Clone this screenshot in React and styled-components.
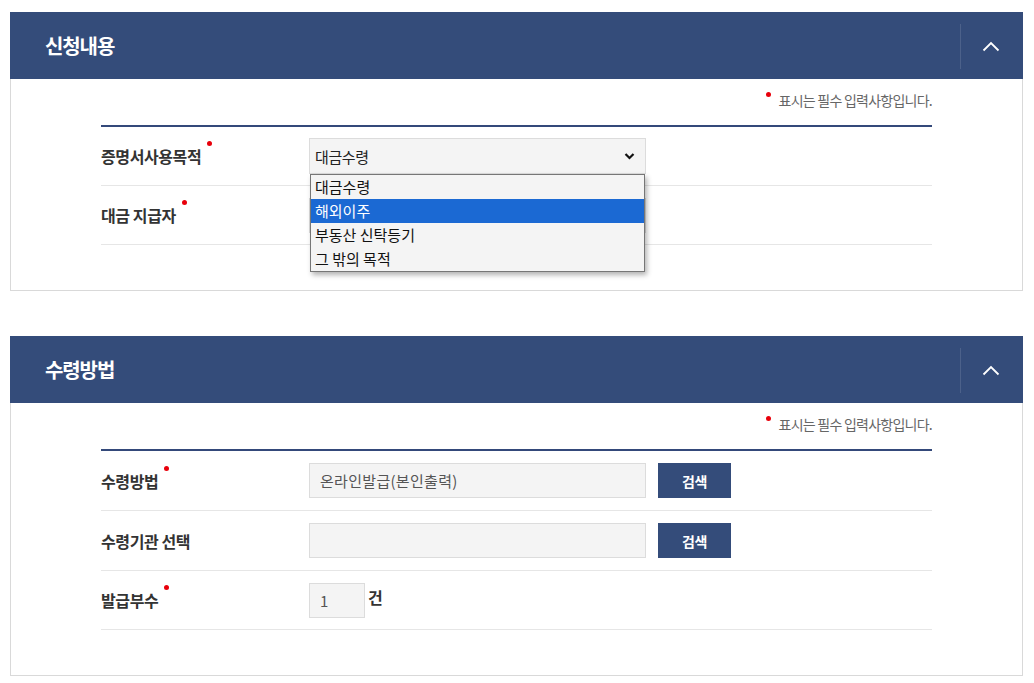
import React from "react";
import styled, { createGlobalStyle } from "styled-components";

const GlobalStyle = createGlobalStyle`
  * { box-sizing: border-box; }
  body {
    margin: 0;
    background: #fff;
    font-family: "Noto Sans CJK KR", "Noto Sans", sans-serif;
    color: #333;
  }
`;

const Page = styled.div`
  padding: 12px 11px 0 10px;
  display: flex;
  flex-direction: column;
  gap: 45px;
`;

const Panel = styled.section`
  width: 1013px;
`;

const Header = styled.div`
  height: 67px;
  background: #344c7a;
  display: flex;
  align-items: center;
  justify-content: space-between;
  padding-left: 35px;
  h2 {
    margin: 0;
    color: #fff;
    font-size: 20px;
    font-weight: 700;
    letter-spacing: -1.1px;
  }
`;

const Toggle = styled.button`
  width: 63px;
  height: 45px;
  margin-top: 2px;
  border: 0;
  border-left: 1px solid rgba(255, 255, 255, 0.12);
  background: transparent;
  display: flex;
  align-items: center;
  justify-content: center;
  padding: 0 2px 0 0;
  cursor: pointer;
`;

const Body = styled.div`
  border: 1px solid #d9d9d9;
  border-top: 0;
  padding: 0 90px 45px;
`;

const Note = styled.p`
  margin: 0;
  height: 46px;
  padding-top: 12px;
  line-height: 19px;
  text-align: right;
  font-size: 14px;
  color: #666;
  letter-spacing: -0.75px;
  span {
    position: relative;
    display: inline-block;
    width: 5px;
    height: 5px;
    margin-right: 8px;
    top: -9px;
    border-radius: 50%;
    background: #e8000b;
  }
`;

const Table = styled.div`
  border-top: 2px solid #34497a;
`;

const Row = styled.div`
  height: ${p => p.$h || 59}px;
  border-bottom: 1px solid #e6e6e6;
  display: flex;
  align-items: center;
`;

const Label = styled.div`
  width: 208px;
  flex-shrink: 0;
  font-size: 16px;
  font-weight: 700;
  color: #333;
  letter-spacing: -0.4px;
  span {
    position: relative;
    display: inline-block;
  }
  span::after {
    content: ${p => (p.$required ? '""' : "none")};
    position: absolute;
    right: -11px;
    top: -3px;
    width: 5px;
    height: 5px;
    border-radius: 50%;
    background: #e8000b;
  }
`;

const Field = styled.div`
  display: flex;
  align-items: center;
  gap: 12px;
  position: relative;
`;

const Input = styled.div`
  width: ${p => p.$w || 337}px;
  height: 35px;
  background: #f4f4f4;
  border: 1px solid #dcdcdc;
  padding-left: 10px;
  display: flex;
  align-items: center;
  font-size: 15px;
  color: #555;
  letter-spacing: 0.3px;
`;

const SelectBox = styled.div`
  width: 337px;
  height: 36px;
  background: #f4f4f4;
  border: 1px solid #dcdcdc;
  padding: 0 10px 0 5px;
  display: flex;
  align-items: center;
  justify-content: space-between;
  font-size: 15px;
  color: #222;
  letter-spacing: -0.4px;
`;

const Options = styled.ul`
  position: absolute;
  top: 36px;
  left: 1px;
  width: 335px;
  margin: 0;
  padding: 0;
  list-style: none;
  background: #f4f4f4;
  border: 1px solid #767676;
  box-shadow: 2px 3px 5px rgba(0, 0, 0, 0.3);
  z-index: 10;
`;

const Option = styled.li`
  height: 24px;
  line-height: 24px;
  padding-left: 4px;
  font-size: 15px;
  color: ${p => (p.$active ? "#fff" : "#111")};
  background: ${p => (p.$active ? "#1b69d3" : "transparent")};
  letter-spacing: 0;
`;

const Button = styled.button`
  width: 73px;
  height: 35px;
  border: 0;
  background: #344c7a;
  color: #fff;
  font-family: inherit;
  font-size: 14px;
  font-weight: 700;
  letter-spacing: -0.3px;
  cursor: pointer;
`;

const Unit = styled.span`
  font-size: 16px;
  font-weight: 700;
  color: #333;
  margin-left: -9px;
  margin-top: -6px;
`;

const ChevronUp = () => (
  <svg width="18" height="11" viewBox="0 0 18 11" fill="none">
    <path d="M1.5 9.5L9 2l7.5 7.5" stroke="#fff" strokeWidth="1.8" />
  </svg>
);

const ChevronDown = () => (
  <svg width="11" height="8" viewBox="0 0 11 8" fill="none">
    <path d="M1.5 2l4 4 4-4" stroke="#111" strokeWidth="2.2" />
  </svg>
);

const PanelHeader = ({ title }) => (
  <Header>
    <h2>{title}</h2>
    <Toggle aria-label="접기">
      <ChevronUp />
    </Toggle>
  </Header>
);

const RequiredNote = () => (
  <Note>
    <span />
    표시는 필수 입력사항입니다.
  </Note>
);

const purposes = ["대금수령", "해외이주", "부동산 신탁등기", "그 밖의 목적"];

const App = () => {
  return (
    <>
      <GlobalStyle />
      <Page>
        <Panel>
          <PanelHeader title="신청내용" />
          <Body>
            <RequiredNote />
            <Table>
              <Row $h={59}>
                <Label $required>
                  <span>증명서사용목적</span>
                </Label>
                <Field>
                  <SelectBox>
                    대금수령
                    <ChevronDown />
                  </SelectBox>
                  <Options>
                    {purposes.map((p, i) => (
                      <Option key={p} $active={i === 1}>
                        {p}
                      </Option>
                    ))}
                  </Options>
                </Field>
              </Row>
              <Row $h={59}>
                <Label $required>
                  <span>대금 지급자</span>
                </Label>
                <Field>
                  <Input />
                </Field>
              </Row>
            </Table>
          </Body>
        </Panel>

        <Panel>
          <PanelHeader title="수령방법" />
          <Body>
            <RequiredNote />
            <Table>
              <Row $h={60}>
                <Label $required>
                  <span>수령방법</span>
                </Label>
                <Field>
                  <Input>온라인발급(본인출력)</Input>
                  <Button>검색</Button>
                </Field>
              </Row>
              <Row $h={60}>
                <Label>
                  <span>수령기관 선택</span>
                </Label>
                <Field>
                  <Input />
                  <Button>검색</Button>
                </Field>
              </Row>
              <Row $h={59}>
                <Label $required>
                  <span>발급부수</span>
                </Label>
                <Field>
                  <Input $w={56}>1</Input>
                  <Unit>건</Unit>
                </Field>
              </Row>
            </Table>
          </Body>
        </Panel>
      </Page>
    </>
  );
};

export default App;
